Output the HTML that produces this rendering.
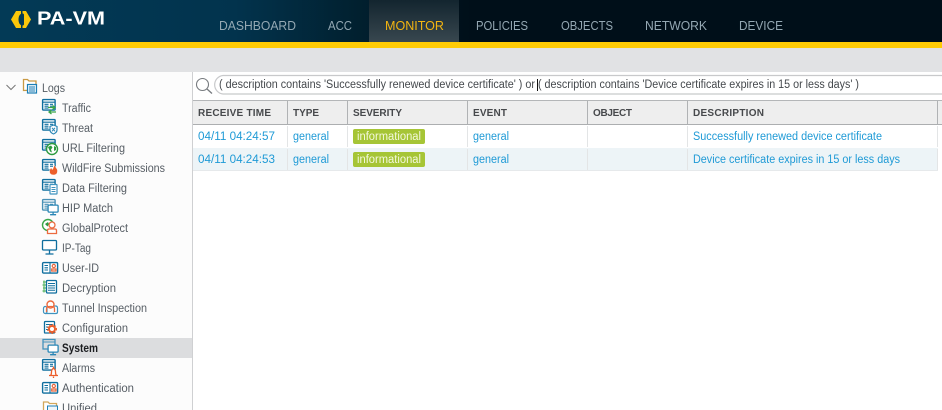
<!DOCTYPE html>
<html><head><meta charset="utf-8"><style>
html,body{margin:0;padding:0;background:#fff;width:942px;height:410px;overflow:hidden}
svg{display:block;font-family:"Liberation Sans",sans-serif}
.nav{font-size:13px;fill:#94a8b3}
.side{font-size:11.5px;fill:#565d64}
.th{font-size:10px;font-weight:bold;fill:#47494c}
.td{font-size:11.5px;fill:#1e9ad6}
</style></head><body>
<svg width="942" height="410" viewBox="0 0 942 410" xmlns="http://www.w3.org/2000/svg">
<defs>
<linearGradient id="hd" x1="0" x2="1" y1="0" y2="0"><stop offset="0" stop-color="#033a56"/><stop offset=".25" stop-color="#02334d"/><stop offset=".38" stop-color="#01202f"/><stop offset=".5" stop-color="#000f19"/><stop offset="1" stop-color="#000f19"/></linearGradient>
<linearGradient id="tab" x1="0" x2="0" y1="0" y2="1"><stop offset="0" stop-color="#13252f"/><stop offset="1" stop-color="#38474f"/></linearGradient>
<symbol id="doc" overflow="visible"><rect x=".6" y=".6" width="12.5" height="10.5" fill="#fff" stroke="#0f6e9e" stroke-width="1.4" rx=".8"/><path d="M1 3.2h12M2.5 5.3h4M2.5 7.2h4M2.5 9.1h4M8 5.3h3M8 7.2h3" stroke="#0f6e9e" stroke-width="1.1" fill="none"/></symbol>
<symbol id="mon" overflow="visible"><rect x=".6" y=".6" width="10" height="7" rx="1" fill="#fff" stroke="#2a86b5" stroke-width="1.3"/><path d="M5.6 7.6v2.4M2.6 10.2h6" stroke="#2a86b5" stroke-width="1.3" fill="none"/></symbol>
<symbol id="book" overflow="visible"><rect x=".6" y=".6" width="15" height="10.5" rx="1" fill="#fff" stroke="#0f6e9e" stroke-width="1.4"/><path d="M8 .6v10.5M2.5 3.5h3.500M2.5 5.8h3.500M2.5 8h3.500" stroke="#0f6e9e" stroke-width="1.1"/><circle cx="11.8" cy="4" r="1.6" fill="none" stroke="#e8643a" stroke-width="1.2"/><path d="M9.7 9v-2h4.300v2z" fill="none" stroke="#e8643a" stroke-width="1.2"/></symbol>
</defs>

<!-- header -->
<rect width="942" height="42" fill="url(#hd)"/>
<rect x="369" width="90" height="42" fill="url(#tab)"/>
<rect y="42" width="942" height="6" fill="#ffcb05"/>
<rect y="48" width="942" height="24" fill="#e1e2e4"/>
<path d="M16 11h10l5 8.500-5 8.500H16l-5-8.500z" fill="#fcc70a"/>
<path d="M22.500 13.500c-2.500 0-4 2.500-4 6s1.500 6 4 6c1 0 1.500-.5 1.500-1.500v-9c0-1-.5-1.500-1.500-1.500z" fill="#033a56"/>
<path d="M21 10.500h1.500v3.500H21zM21 25h1.500v3.500H21z" fill="#033a56"/>
<text x="37" y="24.500" font-size="18.500" font-weight="bold" fill="#fff" textLength="68" lengthAdjust="spacingAndGlyphs">PA-VM</text>
<text class="nav" x="219" y="30" textLength="77" lengthAdjust="spacingAndGlyphs">DASHBOARD</text>
<text class="nav" x="328" y="30" textLength="24" lengthAdjust="spacingAndGlyphs">ACC</text>
<text class="nav" x="385" y="30" textLength="59" lengthAdjust="spacingAndGlyphs" style="fill:#f2b411">MONITOR</text>
<text class="nav" x="476" y="30" textLength="52" lengthAdjust="spacingAndGlyphs">POLICIES</text>
<text class="nav" x="561" y="30" textLength="52" lengthAdjust="spacingAndGlyphs">OBJECTS</text>
<text class="nav" x="645" y="30" textLength="62" lengthAdjust="spacingAndGlyphs">NETWORK</text>
<text class="nav" x="739" y="30" textLength="44" lengthAdjust="spacingAndGlyphs">DEVICE</text>

<!-- sidebar -->
<rect y="72" width="192" height="338" fill="#fcfcfc"/>
<rect x="192" y="72" width="1" height="338" fill="#cfd0d2"/>
<rect y="338" width="192" height="20" fill="#dcdddf"/>
<path d="M6.500 85l4.500 4.500 4.500-4.500" fill="none" stroke="#777" stroke-width="1"/>
<path d="M23.500 90.500v-11h4l1.500 1.500h7v9z" fill="#fff" stroke="#c99a45" stroke-width="1.300"/>
<rect x="27.500" y="84.500" width="9" height="8.500" fill="#eef6fa" stroke="#1d7fb5" stroke-width="1.200"/>
<path d="M29 87h6M29 89h6M29 91h6" stroke="#1d7fb5"/>
<text class="side" x="42" y="92" textLength="23" lengthAdjust="spacingAndGlyphs">Logs</text>

<use href="#doc" x="42" y="99"/>
<path d="M48 107.500h7M52.500 105.500l2.500 2-2.500 2M56 112h-7M51.500 110l-2.500 2 2.500 2" fill="none" stroke="#3aa648" stroke-width="1.300"/>
<use href="#doc" x="42" y="119"/>
<path d="M50 126.500l3.500-1.500 3.500 1.500v3.500q0 2.500-3.500 4-3.500-1.500-3.500-4z" fill="#fff" stroke="#2a86b5" stroke-width="1.200"/>
<path d="M52 127.800l3 3.500M55 127.800l-3 3.500" stroke="#2a86b5"/>
<use href="#doc" x="42" y="139"/>
<circle cx="52" cy="149" r="5.500" fill="#fff" stroke="#2c9a3f" stroke-width="1.400"/>
<path d="M48 147l3-1.500 1.500 2-1.500 2 1 3-2-1zM54 146l2 1 0 3-2 1z" fill="#2c9a3f"/>
<use href="#doc" x="42" y="159"/>
<path d="M54 164.500C55 167 58 169 57.500 171.500C57.200 174 55.500 175 53.500 175C51 175 49.500 173.500 49.500 171.500C49.500 169.500 50.500 168.500 51.500 167.500C51.500 169 52 169.500 52.500 169.500C53.500 168 53.800 166 54 164.500Z" fill="#ec5e2a" stroke="#fff" stroke-width=".5"/>
<use href="#doc" x="42" y="179"/>
<rect x="50" y="184.500" width="7" height="9.500" rx=".5" fill="#fff" stroke="#3f93bf" stroke-width="1.200"/>
<path d="M51.500 187.500h4M51.500 189.500h4M51.500 191.500h4" stroke="#3f93bf"/>
<g opacity=".75"><use href="#doc" x="42" y="199"/></g>
<use href="#mon" x="47.500" y="204.500"/>
<circle cx="48" cy="225" r="5.500" fill="#fff" stroke="#3aa648" stroke-width="1.400"/>
<path d="M45 224l3-2 1 2-1.500 2.500z" fill="#2c9a3f"/>
<circle cx="52" cy="225" r="3" fill="#fff" stroke="#ec6b3f" stroke-width="1.300"/>
<path d="M47.500 233.500v-3q0-1.500 1.500-1.500h6q1.500 0 1.500 1.500v3z" fill="#fff" stroke="#ec6b3f" stroke-width="1.300"/>
<rect x="42.500" y="240.500" width="14" height="9.500" rx="1" fill="#fff" stroke="#0f6e9e" stroke-width="1.300"/>
<path d="M49.500 250v3.500M45.500 254h8" stroke="#0f6e9e" stroke-width="1.300"/>
<use href="#book" x="42" y="262"/>
<path d="M43 282h3M42.500 285h3.500M43 288h3M42.500 291h3.500M44 280.500v12" stroke="#5fb96b" stroke-width="1.200" fill="none"/>
<rect x="46.500" y="280.500" width="10" height="12.500" rx="1" fill="#fff" stroke="#0f6e9e" stroke-width="1.300"/>
<path d="M48 283.500h7M48 285.800h7M48 288h7M48 290.300h7" stroke="#0f6e9e"/>
<rect x="43.500" y="306.500" width="3.500" height="7" rx="1.700" fill="#fff" stroke="#3f93bf" stroke-width="1.200"/>
<path d="M45 313.500h11q1.500 0 1.500-1.500v-4q0-2-2-2h-1.500" fill="none" stroke="#3f93bf" stroke-width="1.200"/>
<circle cx="50.500" cy="304.500" r="3.500" fill="#fff" stroke="#ec6b3f" stroke-width="1.400"/>
<path d="M46.500 312v-3q0-2.500 2.500-2.500h3q2.500 0 2.500 2.500v3" fill="none" stroke="#ec6b3f" stroke-width="1.300"/>
<rect x="44.500" y="321.500" width="10" height="11.500" rx=".8" fill="#fff" stroke="#0f6e9e" stroke-width="1.300"/>
<path d="M46 324.500h7M46 327h3M46 329.500h3" stroke="#0f6e9e"/>
<circle cx="52" cy="329" r="3" fill="#fff" stroke="#ec5e2a" stroke-width="2"/>
<circle cx="52" cy="329" r="4.500" fill="none" stroke="#ec5e2a" stroke-width="1" stroke-dasharray="1.500 1.500"/>
<g opacity=".85"><rect x="43" y="339.500" width="12" height="9.500" fill="none" stroke="#2a86b5" stroke-width="1.300"/><path d="M43 342h12" stroke="#2a86b5"/></g>
<use href="#mon" x="47.500" y="344.500"/>
<use href="#doc" x="42" y="359"/>
<path d="M49 375.500h9M50.500 375.500q1-1 1-3.500 0-3 2-3.500 2 .5 2 3.500 0 2.500 1 3.500z" fill="#fff" stroke="#ec5e2a" stroke-width="1.300"/>
<path d="M53.500 376.500v1.500M53.500 366.500v2" stroke="#ec5e2a" stroke-width="1.300"/>
<use href="#book" x="42" y="382"/>
<path d="M43.500 410v-8h4.500l1.500 1.500h7v7" fill="#fff" stroke="#d2a75a" stroke-width="1.300"/>
<rect x="47.500" y="406" width="10" height="6" fill="#eef6fa" stroke="#1d7fb5"/>

<text class="side" x="62" y="112" textLength="29" lengthAdjust="spacingAndGlyphs">Traffic</text>
<text class="side" x="62" y="132" textLength="31" lengthAdjust="spacingAndGlyphs">Threat</text>
<text class="side" x="62" y="152" textLength="63" lengthAdjust="spacingAndGlyphs">URL Filtering</text>
<text class="side" x="62" y="172" textLength="103" lengthAdjust="spacingAndGlyphs">WildFire Submissions</text>
<text class="side" x="62" y="192" textLength="65" lengthAdjust="spacingAndGlyphs">Data Filtering</text>
<text class="side" x="62" y="212" textLength="51" lengthAdjust="spacingAndGlyphs">HIP Match</text>
<text class="side" x="62" y="232" textLength="66" lengthAdjust="spacingAndGlyphs">GlobalProtect</text>
<text class="side" x="62" y="252" textLength="29" lengthAdjust="spacingAndGlyphs">IP-Tag</text>
<text class="side" x="62" y="272" textLength="37" lengthAdjust="spacingAndGlyphs">User-ID</text>
<text class="side" x="62" y="292" textLength="54" lengthAdjust="spacingAndGlyphs">Decryption</text>
<text class="side" x="62" y="312" textLength="85" lengthAdjust="spacingAndGlyphs">Tunnel Inspection</text>
<text class="side" x="62" y="332" textLength="66" lengthAdjust="spacingAndGlyphs">Configuration</text>
<text class="side" x="62" y="352" textLength="36" lengthAdjust="spacingAndGlyphs" style="font-weight:bold;fill:#1b1d20">System</text>
<text class="side" x="62" y="372" textLength="33" lengthAdjust="spacingAndGlyphs">Alarms</text>
<text class="side" x="62" y="392" textLength="72" lengthAdjust="spacingAndGlyphs">Authentication</text>
<text class="side" x="62" y="412" textLength="35" lengthAdjust="spacingAndGlyphs">Unified</text>

<!-- search -->
<circle cx="202.500" cy="84.500" r="6" fill="none" stroke="#777b7f" stroke-width="1.100"/>
<path d="M207 89l5 4.500" stroke="#777b7f" stroke-width="1.300"/>
<path d="M942 75.500H223a9.300 9.300 0 0 0 0 18.500H942" fill="#fff" stroke="#c8c9cb" stroke-width="1.200"/>
<text x="219" y="88" font-size="11.5" fill="#44484c" textLength="316" lengthAdjust="spacingAndGlyphs">( description contains 'Successfully renewed device certificate' ) or</text>
<rect x="537" y="79" width="1" height="12" fill="#111"/>
<text x="538" y="88" font-size="11.5" fill="#44484c" textLength="321" lengthAdjust="spacingAndGlyphs">( description contains 'Device certificate expires in 15 or less days' )</text>

<!-- table -->
<rect x="193" y="100" width="749" height="1" fill="#b4b6b8"/>
<rect x="193" y="101" width="749" height="23" fill="#eeeeee"/>
<rect x="193" y="124" width="749" height="1" fill="#acaeb0"/>
<rect x="193" y="148" width="745" height="22" fill="#edf4f7"/>
<rect x="193" y="170" width="745" height="1" fill="#e6e9eb"/>
<path d="M287.500 101v23M347.500 101v23M467.500 101v23M587.500 101v23M687.500 101v23M937.500 101v23" stroke="#b0b2b4"/>
<path d="M287.500 126v21M347.500 126v21M467.500 126v21M587.500 126v21M687.500 126v21M937.500 126v21M287.500 149v21M347.500 149v21M467.500 149v21M587.500 149v21M687.500 149v21M937.500 149v21" stroke="#e3e5e6"/>
<text class="th" x="198" y="116" textLength="73" lengthAdjust="spacing">RECEIVE TIME</text>
<text class="th" x="293" y="116" textLength="26" lengthAdjust="spacing">TYPE</text>
<text class="th" x="353" y="116" textLength="49" lengthAdjust="spacing">SEVERITY</text>
<text class="th" x="473" y="116" textLength="34" lengthAdjust="spacing">EVENT</text>
<text class="th" x="593" y="116" textLength="39" lengthAdjust="spacing">OBJECT</text>
<text class="th" x="693" y="116" textLength="71" lengthAdjust="spacing">DESCRIPTION</text>

<text class="td" x="198" y="140" textLength="77" lengthAdjust="spacingAndGlyphs">04/11 04:24:57</text>
<text class="td" x="293" y="140" textLength="36" lengthAdjust="spacingAndGlyphs">general</text>
<rect x="353" y="129" width="72" height="15" rx="2" fill="#a6c536"/>
<text x="357" y="140" font-size="11.5" fill="#f3f8dc" textLength="64" lengthAdjust="spacingAndGlyphs">informational</text>
<text class="td" x="473" y="140" textLength="36" lengthAdjust="spacingAndGlyphs">general</text>
<text class="td" x="693" y="140" textLength="189" lengthAdjust="spacingAndGlyphs">Successfully renewed device certificate</text>

<text class="td" x="198" y="163" textLength="77" lengthAdjust="spacingAndGlyphs">04/11 04:24:53</text>
<text class="td" x="293" y="163" textLength="36" lengthAdjust="spacingAndGlyphs">general</text>
<rect x="353" y="152" width="72" height="15" rx="2" fill="#a6c536"/>
<text x="357" y="163" font-size="11.5" fill="#f3f8dc" textLength="64" lengthAdjust="spacingAndGlyphs">informational</text>
<text class="td" x="473" y="163" textLength="36" lengthAdjust="spacingAndGlyphs">general</text>
<text class="td" x="693" y="163" textLength="207" lengthAdjust="spacingAndGlyphs">Device certificate expires in 15 or less days</text>
</svg>
</body></html>
